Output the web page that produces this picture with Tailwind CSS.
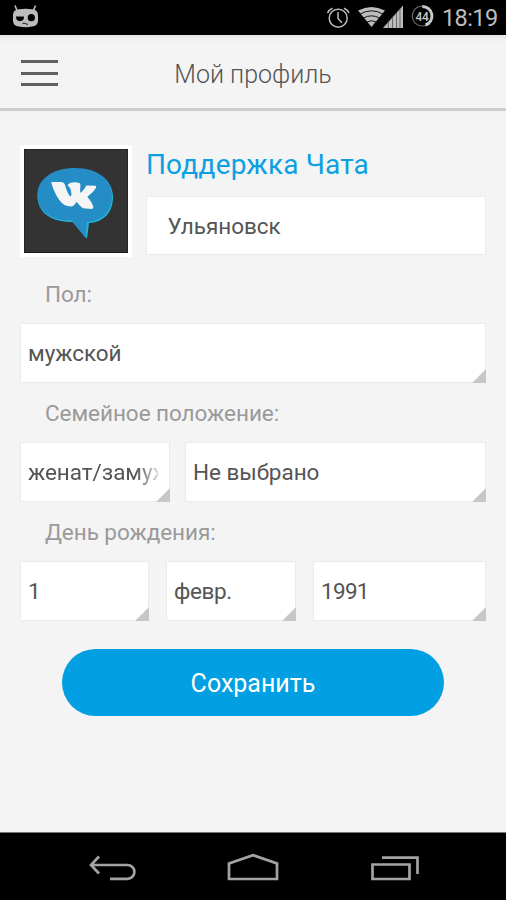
<!DOCTYPE html>
<html lang="ru">
<head>
<meta charset="utf-8">
<title>Мой профиль</title>
<script src="https://cdn.jsdelivr.net/npm/@tailwindcss/browser@4"></script>
</head>
<body class="w-[506px] h-[900px] overflow-hidden bg-[#f4f4f4] font-['Roboto',sans-serif] text-[#555] flex flex-col">
  <div class="h-[35px] shrink-0 bg-black flex items-center relative z-10">
    <svg class="ml-[12px]" width="28" height="35" viewBox="12 0 28 35">
      <path d="M15 5.500l2 5M35.500 5.500l-2 5" stroke="#bcbcbc" stroke-width="1.600" fill="none"/>
      <path d="M19 9.200q6.500-1 13 0q6 .6 6 6v5.500q0 5-6 5.900q-6.500 1.100-13 0q-6-.9-6-5.900v-5.500q0-5.400 6-6z" fill="#bcbcbc"/>
      <circle cx="31.300" cy="17.700" r="3.600" fill="#000"/>
      <path d="M16 16.600h8q0 4.600-4 4.600t-4-4.600z" fill="#000"/>
      <path d="M22.500 23.600q1.500-1 3 0q1.500.7 2.500.8" stroke="#111" fill="none"/>
    </svg>
    <svg class="ml-[284px]" width="112" height="35" viewBox="324 0 112 35">
      <g stroke="#bcbcbc" fill="none">
        <circle cx="338.200" cy="18.200" r="9" stroke-width="1.500"/>
        <path d="M338 12v6.500l4 4.200" stroke-width="1.500"/>
        <path d="M327.500 13q1.200-3 5-4.700M349 13q-1.200-3-5-4.700" stroke-width="1.500"/>
      </g>
      <path d="M358 10.500q13.500-7 27 0L371.500 27z" fill="#bcbcbc"/>
      <path d="M359.500 14.300q12-7 24 0M363 18.300q8.500-5 17 0M366.500 22.200q5-3 10 0" stroke="#000" stroke-width=".9" fill="none"/>
      <path d="M383 28L403 5.500V28z" fill="#bcbcbc"/>
      <path d="M388.300 20v8M392.500 16v12M396.500 12v16M400 8v20" stroke="#333" stroke-width=".6"/>
      <circle cx="422.300" cy="16" r="10" fill="none" stroke="#666" stroke-width="1.200"/>
      <path d="M422.300 6.500A9.500 9.500 0 0 1 425.500 25" fill="none" stroke="#c8c8c8" stroke-width="3"/>
      <text x="415.400" y="20.600" font-family="Roboto" font-size="12" font-weight="500" fill="#c8c8c8" stroke="#000" stroke-width="1.500" paint-order="stroke" textLength="13.500">44</text>
    </svg>
    <span class="ml-[6px] mt-[2px] text-[23.5px] leading-[35px] tracking-[-0.6px] text-[#bdbdbd]">18:19</span>
  </div>
  <header class="h-[76px] shrink-0 bg-linear-to-b from-[#e6e6e6] to-[#f4f4f4] to-10% border-b-[3px] border-[#cfcfcf] relative flex items-center justify-center">
    <div class="absolute left-[21px] top-[25px] w-[37px] flex flex-col gap-[8.500px]">
      <i class="h-[3px] bg-[#606060]"></i><i class="h-[3px] bg-[#606060]"></i><i class="h-[3px] bg-[#606060]"></i>
    </div>
    <h1 class="mt-[6px] text-[25px] leading-[30px] font-light text-[#555]">Мой профиль</h1>
  </header>
  <main class="flex-1 px-[20px] pt-[34px] text-[22.5px] tracking-[-0.05px]">
    <section class="flex h-[112px]">
      <div class="w-[112px] h-[112px] bg-white p-[4px] shrink-0">
        <svg width="104" height="104" viewBox="0 0 104 104">
          <rect width="104" height="104" fill="#191919"/><rect x=".5" y=".5" width="103" height="102.500" fill="#333"/>
          <path d="M52 20c23 0 37 12 37 28c0 14-8 25-24 26l-2 15.500L48.500 73C26 73 13.500 63 13.500 47C13.500 30 30 20 52 20z" fill="#20b7dc"/>
          <path d="M51 19c23 0 37 12 37 27c0 15-8 26-25 27l-1.500 16L47.500 71.500C26 72 13.500 61 13.500 46C13.500 29 30 19 51 19z" fill="#258dc6"/>
          <path d="M27.500 33h9.500q3 0 4 3q2.500 9 5.500 11.500q1.500-1 .5-5.500q-.5-4-3.500-5.500q1.500-3 5-3q4-.5 7 .5q1.500 1 .8 4q-.6 4 .4 6q4-3.500 5.500-7.500l9.500 .3q1 .3.200 2.300q-2.500 4.500-8.500 8.700q4 4.500 6 10q.2 2-1.600 2.200l-9-.8q-4.500-4-6.500-6.500q-2 4.700-5.500 4.700q-7 0-11.500-6.500q-5-6.500-8-17.300q0-.6.200-.600z" fill="#f5f5f5"/>
        </svg>
      </div>
      <div class="ml-[14px] flex-1">
        <h2 class="text-[28px] leading-[40px] h-[51px] text-[#0aa0e2] whitespace-nowrap"><span class="tracking-[0.15px]">Поддержка Чата</span></h2>
        <div class="h-[59px] bg-white border border-[#ebebeb] pl-[20.500px] leading-[59px]">Ульяновск</div>
      </div>
    </section>
    <p class="h-[66px] pt-[23px] pl-[25px] leading-[28px] text-[#9a9a9a]">Пол:</p>
    <div class="relative h-[60px] bg-white border border-[#ebebeb] pl-[7px] leading-[58px]">мужской
      <i class="absolute -right-px -bottom-px w-[14px] h-[14px] bg-[#c6c8c8] [clip-path:polygon(100%_0,100%_100%,0_100%)]"></i>
    </div>
    <p class="h-[59px] pt-[16px] pl-[25px] leading-[28px] text-[#9a9a9a]">Семейное положение:</p>
    <div class="flex gap-[15px] h-[60px] leading-[58px] whitespace-nowrap">
      <div class="relative w-[150px] shrink-0 bg-white border border-[#ebebeb] pl-[7px]">
        <div class="w-[130px] overflow-hidden [mask-image:linear-gradient(to_right,#000_108px,transparent_136px)]">женат/замужем</div>
        <i class="absolute -right-px -bottom-px w-[14px] h-[14px] bg-[#c6c8c8] [clip-path:polygon(100%_0,100%_100%,0_100%)]"></i>
      </div>
      <div class="relative flex-1 bg-white border border-[#ebebeb] pl-[7px]">Не выбрано
        <i class="absolute -right-px -bottom-px w-[14px] h-[14px] bg-[#c6c8c8] [clip-path:polygon(100%_0,100%_100%,0_100%)]"></i>
      </div>
    </div>
    <p class="h-[59px] pt-[16px] pl-[25px] leading-[28px] text-[#9a9a9a]">День рождения:</p>
    <div class="grid grid-cols-[129px_130px_173px] gap-[17px] h-[60px] leading-[58px]">
      <div class="relative bg-white border border-[#ebebeb] pl-[7px]">1
        <i class="absolute -right-px -bottom-px w-[14px] h-[14px] bg-[#c6c8c8] [clip-path:polygon(100%_0,100%_100%,0_100%)]"></i>
      </div>
      <div class="relative bg-white border border-[#ebebeb] pl-[7px] tracking-[-0.4px]">февр.
        <i class="absolute -right-px -bottom-px w-[14px] h-[14px] bg-[#c6c8c8] [clip-path:polygon(100%_0,100%_100%,0_100%)]"></i>
      </div>
      <div class="relative bg-white border border-[#ebebeb] pl-[7px] tracking-[-0.7px]">1991
        <i class="absolute -right-px -bottom-px w-[14px] h-[14px] bg-[#c6c8c8] [clip-path:polygon(100%_0,100%_100%,0_100%)]"></i>
      </div>
    </div>
    <button class="block mt-[28px] ml-[42px] w-[382px] h-[67px] rounded-full bg-[#029fe3] text-white text-[25px] leading-[67px] pt-px tracking-normal">Сохранить</button>
  </main>
  <nav class="h-[68px] shrink-0 bg-black border-t border-[#777]">
    <svg width="506" height="67" viewBox="0 833 506 67" fill="none" stroke="#a3a3a3" stroke-width="2.700">
      <path d="M99 856.500L91 865l8 8.500M91 865h36.500a6.800 6.800 0 0 1 0 13.800H110"/>
      <path d="M229 879v-15.500l24-8.300l24 8.300V879z"/>
      <path d="M372.500 864.500h37V879h-37zM382 857.700h35.500V874"/>
    </svg>
  </nav>
</body>
</html>
